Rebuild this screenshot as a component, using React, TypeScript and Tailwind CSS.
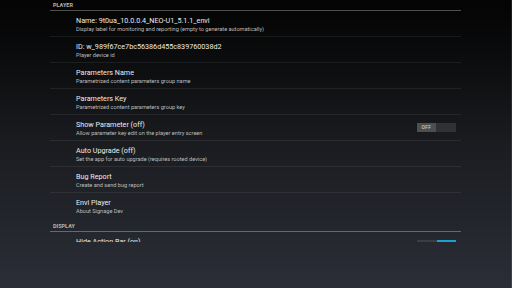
import React from 'react'

interface Pref {
  title: string
  summary?: string
  toggle?: 'on' | 'off'
  last?: boolean
}

const player: Pref[] = [
  { title: 'Name: 9t0ua_10.0.0.4_NEO-U1_5.1.1_envi', summary: 'Display label for monitoring and reporting (empty to generate automatically)' },
  { title: 'ID: w_989f67ce7bc56386d455c839760038d2', summary: 'Player device id' },
  { title: 'Parameters Name', summary: 'Parametrized content parameters group name' },
  { title: 'Parameters Key', summary: 'Parametrized content parameters group key' },
  { title: 'Show Parameter (off)', summary: 'Allow parameter key edit on the player entry screen', toggle: 'off' },
  { title: 'Auto Upgrade (off)', summary: 'Set the app for auto upgrade (requires rooted device)' },
  { title: 'Bug Report', summary: 'Create and send bug report' },
  { title: 'Envi Player', summary: 'About Signage Dev', last: true },
]

// only the top of this row is on screen
const display: Pref[] = [{ title: 'Hide Action Bar (on)', toggle: 'on' }]

function Toggle({ state }: { state: 'on' | 'off' }) {
  if (state === 'off') {
    return (
      <div className="flex h-[9px] w-[39px] bg-[#2f3133]">
        <div className="flex h-full w-[19px] items-center justify-center bg-[#4d4e50] text-[5px] leading-none font-medium tracking-[0.3px] text-[#c8c8c8]">
          OFF
        </div>
      </div>
    )
  }
  return (
    <div className="flex h-[9px] w-[39px] items-start bg-[#26292e]">
      <div className="h-[2px] w-[20px] bg-[#3a3d42]" />
      <div className="h-full w-[19px] border-t-2 border-[#1ba0d0] bg-[#1c3a4a]" />
    </div>
  )
}

function Row({ p }: { p: Pref }) {
  return (
    <div className={`flex h-[26px] items-start ${p.last ? '' : 'border-b border-white/[0.07]'}`}>
      <div className="flex-1 pt-[5px] pl-[26px]">
        <div className="text-[7.2px] leading-[9px] whitespace-nowrap text-[#ececec]">{p.title}</div>
        {p.summary && (
          <div className="text-[5.6px] leading-[8px] whitespace-nowrap text-[#bdbdbd]">{p.summary}</div>
        )}
      </div>
      {p.toggle && (
        <div className="self-center pr-[5px]">
          <Toggle state={p.toggle} />
        </div>
      )}
    </div>
  )
}

function Header({ label }: { label: string }) {
  return (
    <div className="h-[13px] border-b border-white/30 pt-[4px] pl-[3px] text-[5.5px] leading-[6px] font-bold text-[#b4b4b4]">
      {label}
    </div>
  )
}

export default function App() {
  return (
    <div
      className="h-[288px] w-[512px] overflow-hidden border-r border-white/10 bg-gradient-to-b from-[#040404] via-[#1a1c20] to-[#2b2e37]"
      style={{ fontFamily: "Roboto, 'Noto Sans', sans-serif" }}
    >
      {/* preference list, scrolled a little */}
      <div className="ml-[50px] h-[242px] w-[411px] overflow-hidden">
        <div className="-mt-[2px]">
          <Header label="PLAYER" />
          {player.map((p) => (
            <Row key={p.title} p={p} />
          ))}
          <Header label="DISPLAY" />
          {display.map((p) => (
            <Row key={p.title} p={p} />
          ))}
        </div>
      </div>
    </div>
  )
}
